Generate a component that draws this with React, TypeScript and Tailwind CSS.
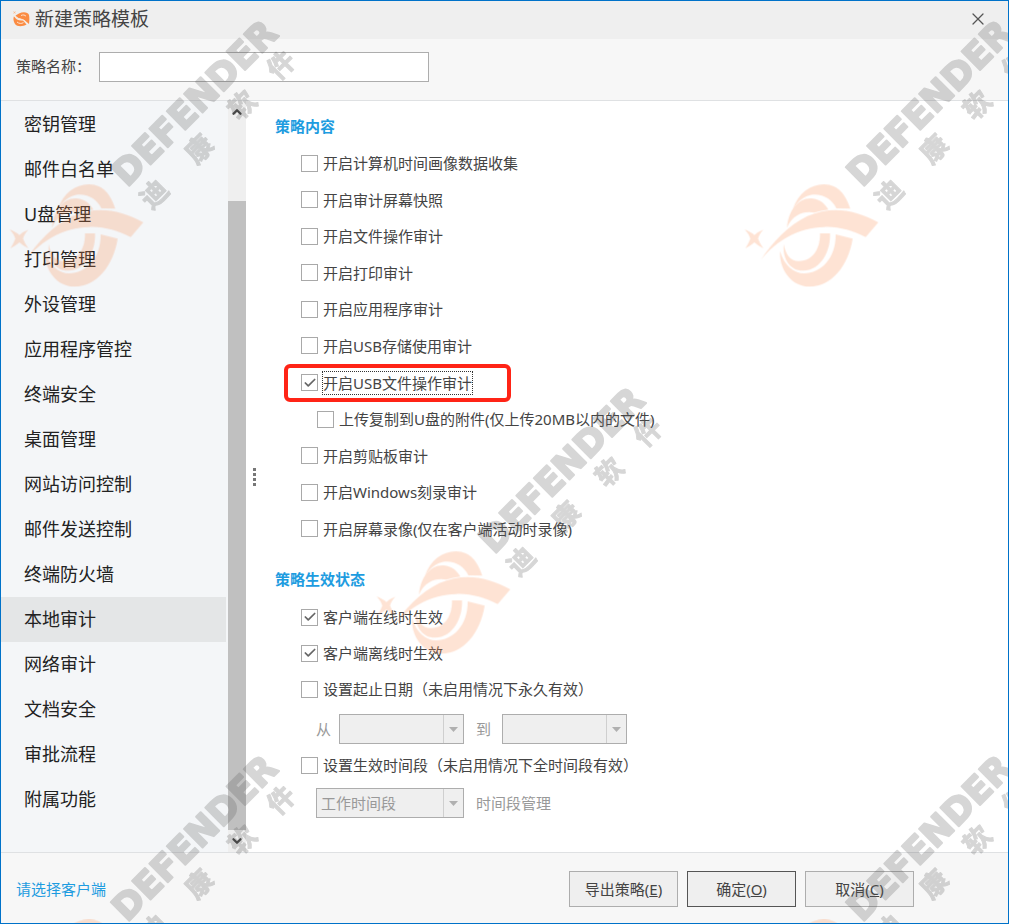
import React, { useState } from 'react';
import { Check, ChevronDown, ChevronUp, X } from 'lucide-react';

const menuItems = [
    '密钥管理', '邮件白名单', 'U盘管理', '打印管理', '外设管理', '应用程序管控', '终端安全', '桌面管理',
    '网站访问控制', '邮件发送控制', '终端防火墙', '本地审计', '网络审计', '文档安全', '审批流程', '附属功能',
];

const auditOptions = [
    { label: '开启计算机时间画像数据收集' },
    { label: '开启审计屏幕快照' },
    { label: '开启文件操作审计' },
    { label: '开启打印审计' },
    { label: '开启应用程序审计' },
    { label: '开启USB存储使用审计' },
    { label: '开启USB文件操作审计', checked: true, highlighted: true },
    { label: '上传复制到U盘的附件(仅上传20MB以内的文件)', nested: true },
    { label: '开启剪贴板审计' },
    { label: '开启Windows刻录审计' },
    { label: '开启屏幕录像(仅在客户端活动时录像)' },
];

const watermarks = [[0, 0], [735, 0], [367, 367], [0, 735], [735, 735]];

const watermarkChars = [
    { char: '迪', x: 153, y: 193 },
    { char: '康', x: 198, y: 148 },
    { char: '软', x: 241, y: 104 },
    { char: '件', x: 280, y: 64 },
];

const Watermark = () => (
    <svg className="pointer-events-none absolute inset-0 h-full w-full overflow-hidden" aria-hidden="true">
        {watermarks.map(([x, y]) => (
            <g key={`${x}-${y}`} transform={`translate(${x} ${y})`} opacity="0.25">
                <g transform="translate(3 -1) scale(0.3333)" fill="#fb8f53">
                    <path d="M17 688Q38 697 46 705Q58 695 73 689Q60 704 57 716Q62 730 73 745Q58 738 46 727Q34 738 19 745Q30 728 34 716Q30 702 17 688Z" />
                    <path d="M65 780C100 725 150 675 205 648C275 618 345 626 418 667L380 711C340 692 300 679 255 681C180 683 115 718 65 780Z" />
                    <path d="M161 628C178 580 212 553 255 553C300 554 320 585 334 626L292 625C280 597 250 580 220 584C195 588 175 605 161 628Z" />
                    <path d="M144 683C147 635 175 595 215 595C240 595 258 610 268 629Q245 632 226 638C200 632 162 640 144 683Z" />
                    <path d="M134 732C140 762 152 783 180 783C222 783 244 745 243 700L273 700C276 752 245 812 192 812C152 812 130 775 134 732Z" />
                    <path d="M290 703L341 716C328 800 275 860 213 860C155 860 120 805 123 753C135 795 165 820 195 820C245 820 291 775 290 703Z" />
                </g>
                <g fill="#5b5b5b" stroke="#5b5b5b" strokeLinejoin="round">
                    <text
                        transform="translate(126 187) rotate(-45)"
                        strokeWidth="2"
                        className="font-['DejaVu_Sans',sans-serif] text-[36px] font-bold"
                    >
                        DEFENDER
                    </text>
                    {watermarkChars.map((item) => (
                        <text
                            key={item.char}
                            transform={`translate(${item.x} ${item.y}) rotate(-45)`}
                            y="10"
                            textAnchor="middle"
                            strokeWidth="1"
                            className="text-[27px] font-bold"
                        >
                            {item.char}
                        </text>
                    ))}
                </g>
            </g>
        ))}
    </svg>
);

const AppIcon = () => (
    <svg className="h-[18px] w-5" viewBox="0 0 20 18" aria-hidden="true">
        <path d="M2 1l1.500 1L5 1l-1 1.500L5 4l-1.500-1L2 4l1-1.500z" fill="#fbb98a" />
        <path d="M8 3.500C12 1.500 17 2 18 5c.6 3 .4 6 0 9l-3.500-3c-2-2.500-6-1-10-5.500z" fill="#fb8c43" />
        <path d="M3 6c1.500 3.500 5 5 9 4.500l3.500 4C12 16.800 6 17 4 14 2.400 11.500 2 8.500 3 6z" fill="#fb8c43" />
        <path d="M3 6c3 3.500 9 2 12.500 6.500M10 5.500c2-1 4-.6 5 .8M6 12c2 1.800 4.500 1.800 6.500.6" fill="none" stroke="#fde3d0" strokeWidth="1" />
    </svg>
);

type CheckRowProps = {
    label: string;
    checked?: boolean;
    highlighted?: boolean;
    nested?: boolean;
};

const CheckRow = ({ label, checked = false, highlighted = false, nested = false }: CheckRowProps) => {
    const [value, setValue] = useState(checked);

    return (
        <label className={`relative flex items-center gap-1 ${nested ? 'pl-[42px]' : 'pl-[26px]'}`}>
            <span className="grid size-[17px] shrink-0 place-items-center">
                <input
                    type="checkbox"
                    checked={value}
                    onChange={(e) => setValue(e.target.checked)}
                    className="col-start-1 row-start-1 size-[17px] appearance-none border border-[#a9a9a9] bg-white"
                />
                {value && <Check className="pointer-events-none col-start-1 row-start-1 size-[14px] text-[#666]" strokeWidth={3} />}
            </span>
            <span className={`border border-dotted leading-[22px] ${highlighted ? 'border-[#333]' : 'border-transparent'}`}>{label}</span>
            {highlighted && <span className="pointer-events-none absolute left-[9px] h-[38px] w-[227px] rounded-md border-4 border-[#ff2416]" />}
        </label>
    );
};

const DisabledSelect = ({ label, value = '', className }: { label: string; value?: string; className: string }) => (
    <span className={`relative flex h-[30px] ${className}`}>
        <select disabled aria-label={label} className="w-full appearance-none border border-[#adadad] bg-[#efefef] px-1 text-[15px] text-[#999] opacity-100">
            <option>{value}</option>
        </select>
        <span className="pointer-events-none absolute inset-y-px right-px flex w-5 items-center justify-center border-l border-[#cfcfcf]">
            <svg className="h-[5px] w-[9px]" viewBox="0 0 9 5" fill="#b0b0b0"><path d="M0 0h9L4.500 5z" /></svg>
        </span>
    </span>
);

const App = () => {
    const [active, setActive] = useState('本地审计');
    const [name, setName] = useState('');

    return (
        <div className="relative flex min-h-screen flex-col border border-[#0072c9] bg-white font-['Noto_Sans','Noto_Sans_CJK_SC',sans-serif] text-[15px] text-[#444]">
            <header className="flex h-[38px] items-center gap-1 bg-[#efefef] pr-5 pb-[2px] pl-[10px]">
                <AppIcon />
                <h1 className="flex-1 text-[19px] leading-6 text-[#444]">新建策略模板</h1>
                <button type="button" aria-label="关闭">
                    <X className="size-5 text-[#555]" strokeWidth={1.5} />
                </button>
            </header>

            <div className="flex h-[62px] items-center border-b border-[#dfe1e3] bg-[#f7f7f7] pb-[6px] pl-[15px]">
                <label htmlFor="policy-name" className="w-[83px]">策略名称：</label>
                <input
                    id="policy-name"
                    value={name}
                    onChange={(e) => setName(e.target.value)}
                    className="h-[30px] w-[330px] border border-[#adadad] bg-white px-2"
                />
            </div>

            <div className="flex flex-1">
                <nav className="w-[227px] bg-[#f4f6f8] pt-px pb-[29px]">
                    {menuItems.map((item) => (
                        <button
                            key={item}
                            type="button"
                            onClick={() => setActive(item)}
                            className={`block h-[45px] w-[225px] pl-[23px] text-left text-[18px] text-[#222] ${active === item ? 'bg-[#e4e6e7]' : ''}`}
                        >
                            {item}
                        </button>
                    ))}
                </nav>

                {/* Scrollbar */}
                <div className="flex w-[18px] flex-col items-center bg-[#efefef]">
                    <ChevronUp className="mt-1 h-[14px] w-[14px] text-[#444]" strokeWidth={4} />
                    <div className="h-[82px]" />
                    <div className="w-full flex-1 bg-[#c0c0c0]" />
                    <ChevronDown className="my-1 h-[14px] w-[14px] text-[#444]" strokeWidth={4} />
                </div>

                {/* Splitter */}
                <div className="flex w-[17px] flex-col items-center justify-center gap-[2px]">
                    {[0, 1, 2, 3].map((dot) => <span key={dot} className="size-[3px] bg-[#777]" />)}
                </div>

                <main className="flex-1 pt-[13px] pl-3">
                    <h2 className="leading-6 font-bold text-[#1e9ce0]">策略内容</h2>
                    <div className="mt-[7px] grid h-[402px] auto-rows-fr">
                        {auditOptions.map((option) => <CheckRow key={option.label} {...option} />)}
                    </div>

                    <h2 className="mt-5 leading-6 font-bold text-[#1e9ce0]">策略生效状态</h2>
                    <div className="mt-2 grid auto-rows-[36px]">
                        <CheckRow label="客户端在线时生效" checked />
                        <CheckRow label="客户端离线时生效" checked />
                        <CheckRow label="设置起止日期（未启用情况下永久有效）" />
                    </div>
                    <div className="flex h-11 items-center pl-[41px] text-[#999]">
                        <span className="w-[23px]">从</span>
                        <DisabledSelect label="开始日期" className="w-[125px]" />
                        <span className="w-[38px] pl-3">到</span>
                        <DisabledSelect label="结束日期" className="w-[125px]" />
                    </div>
                    <div className="grid h-7">
                        <CheckRow label="设置生效时间段（未启用情况下全时间段有效）" />
                    </div>
                    <div className="flex h-12 items-center gap-3 pl-[41px] text-[#999]">
                        <DisabledSelect label="生效时间段" value="工作时间段" className="w-[148px]" />
                        <button type="button" disabled>时间段管理</button>
                    </div>
                </main>
            </div>

            <footer className="flex h-[71px] items-center gap-[9px] border-t border-[#dfe1e3] bg-[#f7f7f7] pt-[2px] pr-[94px] pl-[15px]">
                <a href="#clients" className="mr-auto text-[#1e9ce0]">请选择客户端</a>
                <button type="button" className="h-9 w-[109px] border border-[#adadad] bg-[#efefef]">导出策略(<u>E</u>)</button>
                <button type="button" className="h-9 w-[109px] border border-[#555] bg-[#efefef]">确定(<u>O</u>)</button>
                <button type="button" className="h-9 w-[109px] border border-[#adadad] bg-[#efefef]">取消(<u>C</u>)</button>
            </footer>

            <Watermark />
        </div>
    );
};

export default App;
